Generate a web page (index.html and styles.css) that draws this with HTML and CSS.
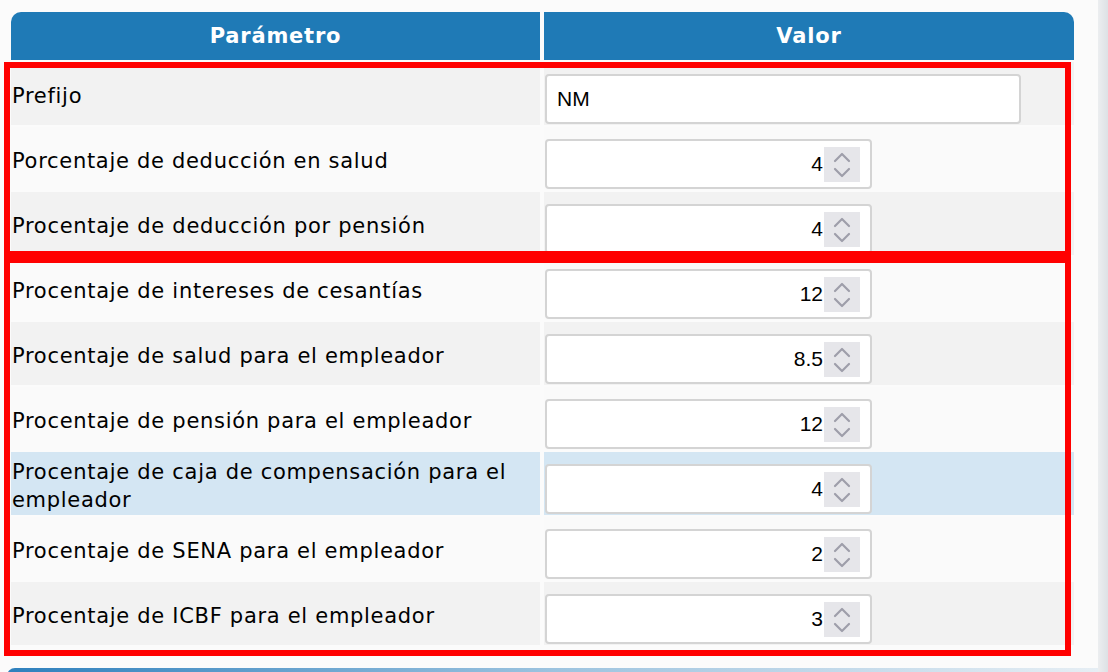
FILE: index.html
```html
<!DOCTYPE html>
<html>
    <head>
        <title>Parámetros de nómina</title>
        <link rel="stylesheet" href="styles.css">
    </head>
    <body>
        <div class="page">
            <div class="content">
                <div class="params">
                    <div class="params-row">
                        <div class="params-head">Parámetro</div>
                        <div class="params-head">Valor</div>
                    </div>
                    <div class="params-row odd">
                        <div class="label">Prefijo</div>
                        <div class="value"><input class="text-field" type="text" value="NM"></div>
                    </div>
                    <div class="params-row even">
                        <div class="label">Porcentaje de deducción en salud</div>
                        <div class="value">
                            <div class="num-field"><input type="text" value="4"><span class="spin"><svg width="36" height="35" viewBox="0 0 36 35"><polyline points="11,14 18,7 25,14"/><polyline points="11,22 18,29 25,22"/></svg></span></div>
                        </div>
                    </div>
                    <div class="params-row odd">
                        <div class="label">Procentaje de deducción por pensión</div>
                        <div class="value">
                            <div class="num-field"><input type="text" value="4"><span class="spin"><svg width="36" height="35" viewBox="0 0 36 35"><polyline points="11,14 18,7 25,14"/><polyline points="11,22 18,29 25,22"/></svg></span></div>
                        </div>
                    </div>
                    <div class="params-row even">
                        <div class="label">Procentaje de intereses de cesantías</div>
                        <div class="value">
                            <div class="num-field"><input type="text" value="12"><span class="spin"><svg width="36" height="35" viewBox="0 0 36 35"><polyline points="11,14 18,7 25,14"/><polyline points="11,22 18,29 25,22"/></svg></span></div>
                        </div>
                    </div>
                    <div class="params-row odd">
                        <div class="label">Procentaje de salud para el empleador</div>
                        <div class="value">
                            <div class="num-field"><input type="text" value="8.5"><span class="spin"><svg width="36" height="35" viewBox="0 0 36 35"><polyline points="11,14 18,7 25,14"/><polyline points="11,22 18,29 25,22"/></svg></span></div>
                        </div>
                    </div>
                    <div class="params-row even">
                        <div class="label">Procentaje de pensión para el empleador</div>
                        <div class="value">
                            <div class="num-field"><input type="text" value="12"><span class="spin"><svg width="36" height="35" viewBox="0 0 36 35"><polyline points="11,14 18,7 25,14"/><polyline points="11,22 18,29 25,22"/></svg></span></div>
                        </div>
                    </div>
                    <div class="params-row hover">
                        <div class="label">Procentaje de caja de compensación para el empleador</div>
                        <div class="value">
                            <div class="num-field"><input type="text" value="4"><span class="spin"><svg width="36" height="35" viewBox="0 0 36 35"><polyline points="11,14 18,7 25,14"/><polyline points="11,22 18,29 25,22"/></svg></span></div>
                        </div>
                    </div>
                    <div class="params-row even">
                        <div class="label">Procentaje de SENA para el empleador</div>
                        <div class="value">
                            <div class="num-field"><input type="text" value="2"><span class="spin"><svg width="36" height="35" viewBox="0 0 36 35"><polyline points="11,14 18,7 25,14"/><polyline points="11,22 18,29 25,22"/></svg></span></div>
                        </div>
                    </div>
                    <div class="params-row odd">
                        <div class="label">Procentaje de ICBF para el empleador</div>
                        <div class="value">
                            <div class="num-field"><input type="text" value="3"><span class="spin"><svg width="36" height="35" viewBox="0 0 36 35"><polyline points="11,14 18,7 25,14"/><polyline points="11,22 18,29 25,22"/></svg></span></div>
                        </div>
                    </div>
                </div>
                <div class="footer-bar"></div>
                <!-- marcas rojas de la captura -->
                <div class="mark mark-top"></div>
                <div class="mark mark-bottom"></div>
            </div>
            <div class="scroll-strip"></div>
        </div>
    </body>
</html>
```

FILE: styles.css
```css
body {
    margin: 0;
    padding: 0;
    background-color: #fbfbfb;
    font-family: "DejaVu Sans", Verdana, sans-serif;
    overflow: hidden;
}
.page {
    display: flex;
    height: 672px;
}
.content {
    position: relative;
    flex: 1;
    padding: 12px 0 0 11px;
}
.params {
    display: flex;
    flex-direction: column;
    gap: 2px;
    width: 1063px;
}
.params-row {
    display: grid;
    grid-template-columns: 529px 530px;
    column-gap: 4px;
}
.params-head {
    height: 48px;
    background-color: #1f7ab6;
    color: #fff;
    font-weight: bold;
    font-size: 21px;
    letter-spacing: 0.8px;
    display: flex;
    align-items: center;
    justify-content: center;
}
.params-head:first-child {
    border-top-left-radius: 10px;
}
.params-head:last-child {
    border-top-right-radius: 10px;
}
.label {
    height: 63px;
    box-sizing: border-box;
    padding: 4px 0 0 1px;
    display: flex;
    align-items: center;
    font-size: 21px;
    letter-spacing: 0.7px;
    line-height: 28px;
    color: #000;
}
.value {
    height: 63px;
    box-sizing: border-box;
    padding: 12px 0 1px 1px;
}
.odd .label, .odd .value {
    background-color: #f2f2f2;
}
.even .label, .even .value {
    background-color: #fafafa;
}
.hover .label, .hover .value {
    background-color: #d4e6f3;
}
.text-field {
    box-sizing: border-box;
    width: 476px;
    height: 50px;
    border: 2px solid #d4d4d4;
    border-radius: 4px;
    background: #fff;
    padding: 0 10px;
    font-family: "Liberation Sans", Arial, sans-serif;
    font-size: 21px;
    color: #000;
    outline: none;
}
.num-field {
    box-sizing: border-box;
    width: 327px;
    height: 50px;
    border: 2px solid #d4d4d4;
    border-radius: 4px;
    background: #fff;
    display: flex;
    align-items: center;
    padding-right: 10px;
}
.num-field input {
    flex: 1;
    min-width: 0;
    border: none;
    outline: none;
    background: transparent;
    text-align: right;
    padding: 0 1px 0 0;
    font-family: "Liberation Sans", Arial, sans-serif;
    font-size: 21px;
    color: #000;
}
.spin {
    width: 36px;
    height: 35px;
    background-color: #e6e6ea;
    display: flex;
}
.spin polyline {
    fill: none;
    stroke: #9e9eaa;
    stroke-width: 2.2;
    stroke-linecap: round;
    stroke-linejoin: round;
}
.footer-bar {
    margin: 23px 0 0 -4px;
    width: 1091px;
    height: 20px;
    border-top-left-radius: 8px;
    background: linear-gradient(to right, #2e80bd, #9cc3df 50%, #e6eef4);
}
.mark {
    position: absolute;
    left: 4px;
    width: 1067px;
    box-sizing: border-box;
    border: 6px solid #ff0000;
}
.mark-top {
    top: 62px;
    height: 195px;
}
.mark-bottom {
    top: 257px;
    height: 399px;
}
.scroll-strip {
    width: 10px;
    background: linear-gradient(to right, #eceef0, #dde1e5);
}
```
